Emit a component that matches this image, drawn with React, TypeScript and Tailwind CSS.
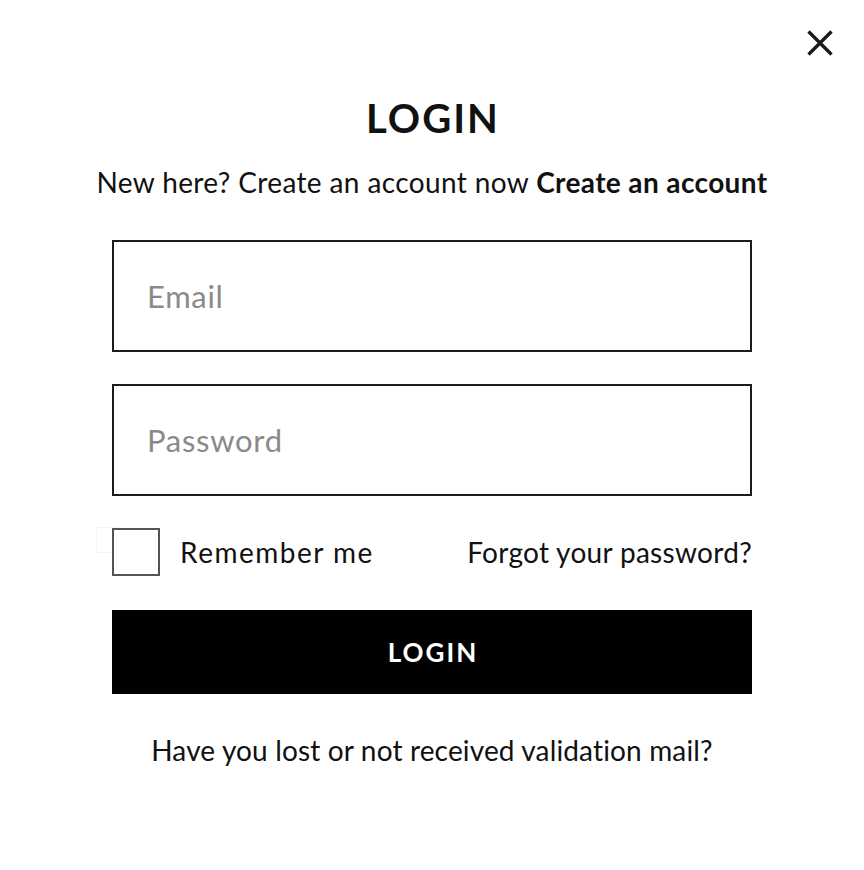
export default function App() {
  return (
    <div
      className="relative min-h-[870px] bg-white text-[#111]"
      style={{ fontFamily: "Lato, 'Noto Sans', sans-serif" }}
    >
      <button
        type="button"
        aria-label="Close"
        className="absolute right-[31px] top-[30px] text-[#1a1a1a]"
      >
        <svg width="26" height="26" viewBox="0 0 26 26" fill="none" stroke="currentColor" strokeWidth="3.3">
          <path d="M1.5 1.5 24.5 24.5M24.5 1.5 1.5 24.5" />
        </svg>
      </button>

      <div className="flex flex-col items-center pt-[96px]">
        <h1 className="pl-[2px] text-[40px] font-bold leading-[44px] tracking-[2px]">LOGIN</h1>
        <p className="mt-[26px] text-[28px] leading-[32px] tracking-[0.38px]">
          New here? Create an account now <a className="font-bold">Create an account</a>
        </p>

        <form className="mt-[42px] flex w-[640px] flex-col">
          <input
            type="email"
            placeholder="Email"
            className="h-[112px] border-2 border-[#1c1c1c] px-[33px] text-[31px] tracking-[0.7px] outline-none placeholder:text-[#8a8a8a]"
          />
          <input
            type="password"
            placeholder="Password"
            className="mt-[32px] h-[112px] border-2 border-[#1c1c1c] px-[33px] text-[31px] tracking-[0.7px] outline-none placeholder:text-[#8a8a8a]"
          />

          <div className="mt-[32px] flex h-[48px] items-center justify-between">
            <label className="relative flex items-center gap-[20px] text-[28px]">
              <span className="absolute left-[-16px] top-[-1px] h-[26px] w-[22px] border border-[#f4f4f4]" />
              <span className="relative h-12 w-12 border-2 border-[#555] bg-white" />
              <span className="tracking-[1.5px]">Remember me</span>
            </label>
            <a className="text-[28px] tracking-[0.3px]">Forgot your password?</a>
          </div>

          <button
            type="button"
            className="mt-[34px] h-[84px] bg-black pl-[2px] text-[26px] font-bold tracking-[2px] text-white"
          >
            LOGIN
          </button>
        </form>

        <p className="mt-[40px] text-[28px] leading-[32px] tracking-[0.15px]">
          Have you lost or not received validation mail?
        </p>
      </div>
    </div>
  );
}
